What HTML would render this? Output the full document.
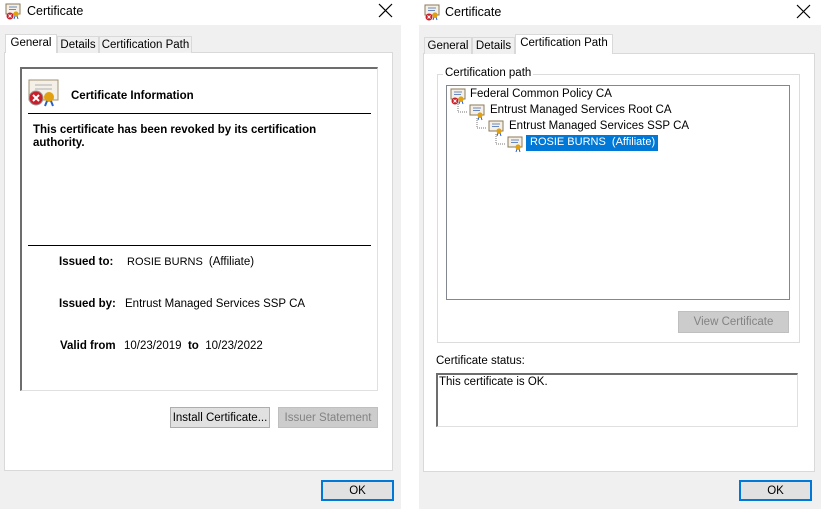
<!DOCTYPE html>
<html><head><style>
*{margin:0;padding:0;box-sizing:border-box}
body{width:821px;height:509px;background:#fff;font-family:"Liberation Sans",sans-serif;font-size:12px;color:#000;position:relative;overflow:hidden}
.a{position:absolute;white-space:nowrap}
.dlg{position:absolute;top:0;height:509px;background:#f0f0f0}
.title{position:absolute;left:0;top:0;right:0;height:25px;background:#fff;font-size:12.5px}
.btn{position:absolute;background:#e1e1e1;border:1px solid #adadad;display:flex;align-items:center;justify-content:center;font-size:11.5px}
.dis{background:#cccccc;border-color:#bfbfbf;color:#838383}
.ok{border:2px solid #0078d7}
.tab{position:absolute;background:#f0f0f0;border:1px solid #d9d9d9;border-bottom:none;font-size:11.5px;text-align:center;line-height:17px}
.sel{background:#fff}
.b{font-weight:bold;font-size:11.5px}
</style></head><body>
<svg width="0" height="0" style="position:absolute"><defs>
<g id="ci"><rect x="1" y="1" width="14" height="10" fill="#f4f0e8" stroke="#8b7a5a"/><line x1="4" y1="4" x2="12" y2="4" stroke="#6a88c0"/><line x1="4" y1="6.5" x2="11" y2="6.5" stroke="#6a88c0"/><circle cx="11" cy="11" r="2.6" fill="#e0a010"/><path d="M10 13l-1 3M12 13l1 3" stroke="#2a60c8"/></g>
<g id="x"><path d="M1 1l13 13M14 1l-13 13" stroke="#000" stroke-width="1.2"/></g>
</defs></svg>

<!-- LEFT DIALOG -->
<div class="dlg" style="left:0;width:401px">
 <div class="title">
  <svg class="a" style="left:5px;top:3px" width="18" height="18"><use href="#ci"/><circle cx="5" cy="13" r="3.5" fill="#c8202a"/><path d="M3.5 11.5l3 3M6.5 11.5l-3 3" stroke="#fff"/></svg>
  <div class="a" style="left:27px;top:4px">Certificate</div>
  <svg class="a" style="left:378px;top:3px" width="16" height="16"><use href="#x"/></svg>
 </div>
 <div class="a" style="left:4px;top:52px;width:389px;height:419px;background:#fff;border:1px solid #d9d9d9"></div>
 <div class="tab sel" style="left:5px;top:34px;width:52px;height:19px;border-color:#d9d9d9">General</div>
 <div class="tab" style="left:57px;top:36px;width:42px;height:17px">Details</div>
 <div class="tab" style="left:99px;top:36px;width:93px;height:17px">Certification Path</div>
 <div class="a" style="left:20px;top:67px;width:358px;height:324px;border:1px solid #e0e0e0;border-left:2px solid #6d6d6d;border-top:2px solid #6d6d6d"></div>
 <svg class="a" style="left:27px;top:78px" width="34" height="30"><rect x="2" y="2" width="29" height="20" fill="#f4f0e8" stroke="#a09070"/><line x1="8" y1="7" x2="25" y2="7" stroke="#b0b0b0"/><line x1="8" y1="11" x2="25" y2="11" stroke="#b0b0b0"/><circle cx="22" cy="19" r="5" fill="#e0a010"/><path d="M20 23l-2 5M24 23l2 5" stroke="#2a60c8" stroke-width="2"/><circle cx="9" cy="20" r="7" fill="#c8202a" stroke="#999"/><path d="M6 17l6 6M12 17l-6 6" stroke="#fff" stroke-width="2"/></svg>
 <div class="a b" style="left:71px;top:90px">Certificate Information</div>
 <div class="a" style="left:28px;top:113px;width:343px;height:1px;background:#000"></div>
 <div class="a b" style="left:33px;top:124px;width:330px;line-height:13px;white-space:normal">This certificate has been revoked by its certification authority.</div>
 <div class="a" style="left:28px;top:245px;width:343px;height:1px;background:#000"></div>
 <div class="a b" style="left:59px;top:256px">Issued to:</div>
 <div class="a" style="left:127px;top:256px;font-size:11px">ROSIE BURNS&nbsp; <span style="font-size:11.5px">(Affiliate)</span></div>
 <div class="a b" style="left:59px;top:298px">Issued by:</div>
 <div class="a" style="left:125px;top:298px;font-size:11.5px">Entrust Managed Services SSP CA</div>
 <div class="a b" style="left:60px;top:340px">Valid from</div>
 <div class="a" style="left:124px;top:340px;font-size:11.5px">10/23/2019 &nbsp;<b>to</b>&nbsp; 10/23/2022</div>
 <div class="btn" style="left:170px;top:407px;width:100px;height:21px">Install Certificate...</div>
 <div class="btn dis" style="left:278px;top:407px;width:100px;height:21px">Issuer Statement</div>
 <div class="btn ok" style="left:321px;top:480px;width:73px;height:21px">OK</div>
</div>

<!-- RIGHT DIALOG -->
<div class="dlg" style="left:419px;width:402px">
 <div class="title">
  <svg class="a" style="left:5px;top:4px" width="18" height="18"><use href="#ci"/><circle cx="5" cy="13" r="3.5" fill="#c8202a"/><path d="M3.5 11.5l3 3M6.5 11.5l-3 3" stroke="#fff"/></svg>
  <div class="a" style="left:26px;top:5px">Certificate</div>
  <svg class="a" style="left:377px;top:4px" width="16" height="16"><use href="#x"/></svg>
 </div>
 <div class="a" style="left:4px;top:53px;width:392px;height:419px;background:#fff;border:1px solid #d9d9d9"></div>
 <div class="tab" style="left:5px;top:37px;width:48px;height:17px">General</div>
 <div class="tab" style="left:53px;top:37px;width:43px;height:17px">Details</div>
 <div class="tab sel" style="left:96px;top:34px;width:98px;height:20px">Certification Path</div>
 <div class="a" style="left:18px;top:74px;width:363px;height:269px;border:1px solid #dcdcdc"></div>
 <div class="a" style="left:24px;top:67px;background:#fff;padding:0 2px;font-size:11.5px">Certification path</div>
 <div class="a" style="left:27px;top:85px;width:344px;height:215px;border:1px solid #828790"></div>
 <svg class="a" style="left:31px;top:88px" width="18" height="18"><use href="#ci"/><circle cx="5" cy="13" r="3.5" fill="#c8202a"/><path d="M3.5 11.5l3 3M6.5 11.5l-3 3" stroke="#fff"/></svg>
 <div class="a" style="left:51px;top:88px;font-size:11.5px">Federal Common Policy CA</div>
 <svg class="a" style="left:38px;top:100px" width="120" height="60"><path d="M1 2v10h10M20 18v10h10M39 34v10h10" stroke="#777" stroke-dasharray="1 1" fill="none"/></svg>
 <svg class="a" style="left:50px;top:104px" width="18" height="18"><use href="#ci"/></svg>
 <div class="a" style="left:71px;top:104px;font-size:11.5px">Entrust Managed Services Root CA</div>
 <svg class="a" style="left:69px;top:120px" width="18" height="18"><use href="#ci"/></svg>
 <div class="a" style="left:90px;top:120px;font-size:11.5px">Entrust Managed Services SSP CA</div>
 <svg class="a" style="left:88px;top:136px" width="18" height="18"><use href="#ci"/></svg>
 <div class="a" style="left:107px;top:135px;height:16px;background:#0078d7;color:#fff;font-size:11px;line-height:15px;padding:0 3px 0 4px">ROSIE BURNS&nbsp; (Affiliate)</div>
 <div class="btn dis" style="left:259px;top:311px;width:111px;height:22px">View Certificate</div>
 <div class="a" style="left:17px;top:355px;font-size:11.5px">Certificate status:</div>
 <div class="a" style="left:17px;top:373px;width:362px;height:54px;border:1px solid #e0e0e0;border-left:2px solid #6d6d6d;border-top:2px solid #6d6d6d;font-size:11.5px;padding:1px 0 0 1px">This certificate is OK.</div>
 <div class="btn ok" style="left:320px;top:480px;width:73px;height:21px">OK</div>
</div>
</body></html>
